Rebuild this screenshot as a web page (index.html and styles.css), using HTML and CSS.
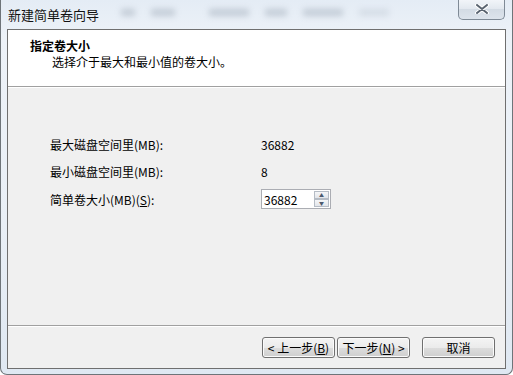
FILE: index.html
```html
<!DOCTYPE html>
<html lang="zh-CN">
  <head>
    <meta charset="UTF-8" />
    <title>新建简单卷向导</title>
    <link rel="stylesheet" href="styles.css">
  </head>
  <body>
    <div class="window">
      <div class="titlebar">
        <span class="title">新建简单卷向导</span>
        <span class="smudges">
          <i class="s1"></i><i class="s2"></i><i class="s3"></i><i class="s4"></i><i class="s5"></i><i class="s6"></i>
        </span>
        <button class="close" type="button">
          <svg width="16" height="10" viewBox="0 0 16 10">
            <path d="M3 1 L13 9 M13 1 L3 9" stroke="#fff" stroke-width="4" stroke-linecap="round" />
            <path d="M3 1 L13 9 M13 1 L3 9" stroke="#5a6470" stroke-width="2" stroke-linecap="round" />
          </svg>
        </button>
      </div>

      <div class="client">
        <div class="header">
          <h1>指定卷大小</h1>
          <p>选择介于最大和最小值的卷大小。</p>
        </div>

        <div class="content">
          <div class="grid">
            <span class="label">最大磁盘空间里(MB):</span>
            <span class="value">36882</span>

            <span class="label">最小磁盘空间里(MB):</span>
            <span class="value">8</span>

            <span class="label">简单卷大小(MB)(<u>S</u>):</span>
            <span class="spinner">
              <input type="text" value="36882" />
              <span class="arrows">
                <span class="arrow">▲</span>
                <span class="arrow">▼</span>
              </span>
            </span>
          </div>
        </div>

        <div class="footer">
          <button class="btn back" type="button">&lt; 上一步(<u>B</u>)</button>
          <button class="btn next" type="button">下一步(<u>N</u>) &gt;</button>
          <button class="btn cancel" type="button">取消</button>
        </div>
      </div>
      <div class="bottom"></div>
    </div>
  </body>
</html>
```

FILE: styles.css
```css
body {
  margin: 0;
  font-family: "Noto Sans CJK SC", "DejaVu Sans", sans-serif;
  font-size: 12px;
  background-color: #ffffff;
}
.window {
  width: 513px;
  height: 375px;
  box-sizing: border-box;
  border: 1px solid #6e7479;
  border-top: none;
  border-radius: 0 0 7px 7px;
  background: linear-gradient(180deg, #e4ecf5 0%, #edf2f8 10%, #e9eff6 60%, #dfe8f2 100%);
  display: flex;
  flex-direction: column;
  overflow: hidden;
}
.titlebar {
  height: 29px;
  display: flex;
  align-items: flex-start;
  padding-left: 7px;
  position: relative;
}
.title {
  margin-top: 5px;
  font-size: 13px;
  color: #111;
}
.smudges {
  display: flex;
  gap: 16px;
  margin: 9px 0 0 22px;
  filter: blur(3px);
  opacity: 0.35;
}
.smudges i {
  display: block;
  height: 7px;
  background-color: #7d8a99;
}
.smudges .s1 { width: 14px; }
.smudges .s2 { width: 24px; }
.smudges .s3 { width: 40px; margin-left: 18px; }
.smudges .s4 { width: 22px; }
.smudges .s5 { width: 40px; }
.smudges .s6 { width: 30px; opacity: 0.5; }
.close {
  position: absolute;
  right: 7px;
  top: -1px;
  width: 47px;
  height: 21px;
  border: 1px solid #7f8a96;
  border-top: none;
  border-radius: 0 0 5px 5px;
  background: linear-gradient(180deg, #f3f6fa 0%, #e2e8ef 50%, #d3dbe4 51%, #dde4ec 100%);
  padding: 0;
  display: flex;
  align-items: center;
  justify-content: center;
}
.client {
  margin: 0 6px 0 6px;
  height: 338px;
  border: 1px solid #6f6f6f;
  display: flex;
  flex-direction: column;
  background-color: #f0f0f0;
}
.header {
  height: 57px;
  background-color: #ffffff;
  border-bottom: 1px solid #a0a0a0;
  box-shadow: 0 1px 0 #ffffff;
  padding: 8px 0 0 22px;
  box-sizing: border-box;
}
.header h1 {
  margin: 0;
  font-size: 12px;
  font-weight: bold;
  line-height: 16px;
  color: #000;
}
.header p {
  margin: 0 0 0 22px;
  line-height: 15px;
  color: #000;
}
.content {
  flex: 1;
  border-bottom: 1px solid #a0a0a0;
  box-shadow: 0 1px 0 #ffffff;
  padding: 50px 0 0 42px;
}
.grid {
  display: grid;
  grid-template-columns: 211px 70px;
  row-gap: 11px;
  align-items: center;
}
.label,
.value {
  line-height: 16px;
  color: #000;
}
.spinner {
  width: 70px;
  height: 20px;
  box-sizing: border-box;
  border: 1px solid #abadb3;
  background-color: #fff;
  display: flex;
  align-items: stretch;
  margin-top: -2px;
}
.spinner input {
  width: 50px;
  border: none;
  padding: 0 0 0 2px;
  font: inherit;
  font-size: 12px;
  outline: none;
}
.arrows {
  display: flex;
  flex-direction: column;
  margin: 1px 1px 1px auto;
  width: 15px;
}
.arrow {
  flex: 1;
  border: 1px solid #b5bcc5;
  background: linear-gradient(180deg, #f5f6f8, #e2e5ea);
  font-size: 5px;
  line-height: 6px;
  color: #4d5a6e;
  text-align: center;
}
.footer {
  height: 42px;
  display: flex;
  align-items: center;
  padding-right: 10px;
  justify-content: flex-end;
}
.btn {
  width: 73px;
  height: 21px;
  border: 1px solid #707070;
  border-radius: 3px;
  background: linear-gradient(180deg, #f4f4f4 0%, #ebebeb 50%, #dddddd 51%, #cfcfcf 100%);
  font: inherit;
  font-size: 12px;
  padding: 0;
  color: #000;
  box-shadow: inset 0 0 0 1px #fbfbfb;
}
.next {
  margin-left: 2px;
}
.cancel {
  margin-left: 12px;
}
.bottom {
  flex: 1;
}
```
